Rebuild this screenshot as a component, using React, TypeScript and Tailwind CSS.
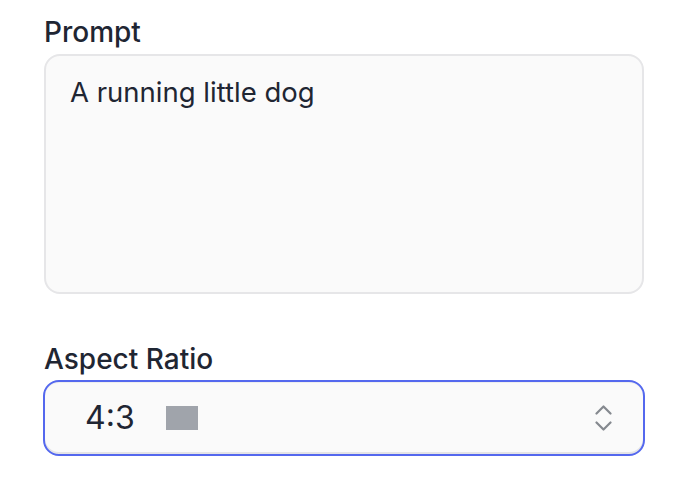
import React from "react";

export default function App() {
  return (
    <div
      className="w-[692px] h-[478px] bg-white pl-[44px] pr-[48px] pt-[16px]"
      style={{ fontFamily: "Inter, 'Noto Sans', sans-serif" }}
    >
      <div className="text-[28px] leading-[32px] font-medium text-[#1f2633]">Prompt</div>
      <div className="mt-[6px] h-[240px] rounded-[16px] border-2 border-[#e6e6e8] bg-[#fafafa] pl-[24px] pr-[22px] pt-[16px]">
        <div className="text-[27.5px] leading-[40px] text-[#1f2633]">A running little dog</div>
      </div>
      <div className="mt-[49px] text-[28px] leading-[32px] font-medium text-[#1f2633]">Aspect Ratio</div>
      <div className="mt-[5px] -ml-[1px] -mr-[1px] h-[76px] rounded-[16px] border-2 border-[#5468ee] bg-[#fafafa] shadow-[inset_0_-2px_0_#e4e4e6,inset_0_1px_0_#eeeeee] flex items-center pl-[40px] pr-[31px]">
        <span className="text-[32px] leading-[40px] text-[#1f2633]">4:3</span>
        <span className="ml-[31px] w-[32px] h-[24px] bg-[#a0a4ab]" />
        <span className="flex-1" />
        <svg width="17" height="29" viewBox="0 0 17 29" fill="none" stroke="#85898f" strokeWidth="2.2" strokeLinecap="round" strokeLinejoin="round">
          <path d="M1.5 9.5 L8.5 2.5 L15.5 9.5" />
          <path d="M1.5 18.5 L8.5 25.5 L15.5 18.5" />
        </svg>
      </div>
    </div>
  );
}
